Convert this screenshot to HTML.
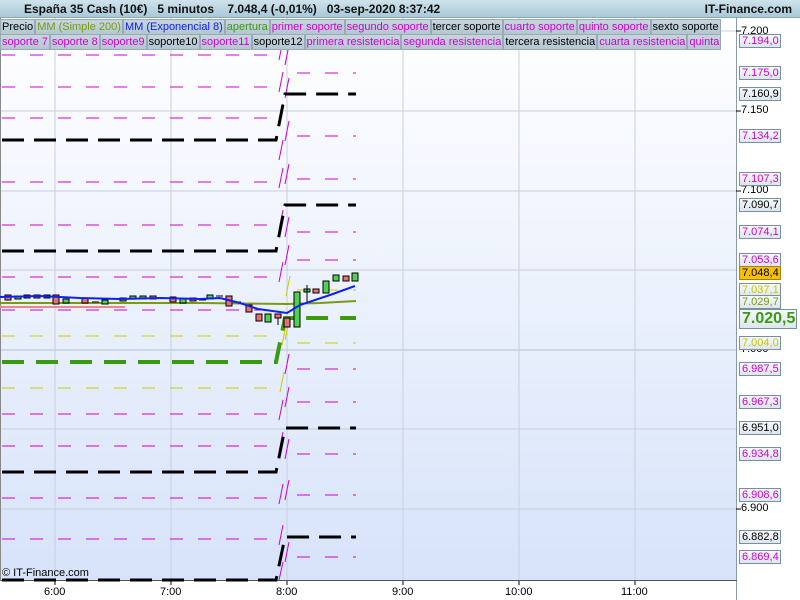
<!DOCTYPE html>
<html><head><meta charset="utf-8"><style>
*{margin:0;padding:0;box-sizing:border-box}
body{width:800px;height:600px;overflow:hidden;position:relative;background:#fff;font-family:"Liberation Sans",sans-serif}
#hdr{position:absolute;left:0;top:0;width:800px;height:18px;background:linear-gradient(#cfe3ec,#a9c9d8);border-bottom:1px solid #8aa;font-size:12px;font-weight:bold;color:#111;line-height:18px}
.row{position:absolute;left:0;height:16px;display:flex;font-size:11px;line-height:14px}
.row span{background:linear-gradient(#c7d6de,#b4c7d1);border:1px solid #9aaab4;padding:0 1px;height:16px;white-space:nowrap}
.m{color:#d000d0}.k{color:#000}
.lab{position:absolute;left:739px;width:42px;height:14px;border:1px solid #7a8f9c;background:linear-gradient(#f6f8fb,#dde6ef);font-size:11px;line-height:12px;padding-left:2px}
.tk{position:absolute;left:741px;font-size:11px;color:#000}
.xl{position:absolute;top:586px;font-size:11px;color:#000}
</style></head><body>
<svg width="800" height="600" style="position:absolute;left:0;top:0">
<defs><linearGradient id="bg" x1="0" y1="0" x2="0" y2="1"><stop offset="0" stop-color="#ffffff"/><stop offset="1" stop-color="#d7e3fa"/></linearGradient></defs>
<rect x="0" y="18" width="737" height="563" fill="url(#bg)"/>
<g stroke="#c8cfdc" stroke-width="1">
<line x1="0" y1="31" x2="737" y2="31"/><line x1="0" y1="111" x2="737" y2="111"/><line x1="0" y1="191" x2="737" y2="191"/><line x1="0" y1="270" x2="737" y2="270"/><line x1="0" y1="350" x2="737" y2="350" stroke="#b8bfcc"/><line x1="0" y1="429" x2="737" y2="429"/><line x1="0" y1="509" x2="737" y2="509"/>
<line x1="55" y1="18" x2="55" y2="585"/><line x1="171" y1="18" x2="171" y2="585"/><line x1="287" y1="18" x2="287" y2="585"/><line x1="403" y1="18" x2="403" y2="585"/><line x1="519" y1="18" x2="519" y2="585"/><line x1="635" y1="18" x2="635" y2="585"/>
</g>
<line x1="736.5" y1="18" x2="736.5" y2="600" stroke="#8a9aa6"/>
<line x1="0" y1="580.5" x2="737" y2="580.5" stroke="#555"/>
<line x1="0.5" y1="18" x2="0.5" y2="581" stroke="#888"/>
<g stroke="#d000d0" stroke-width="1" stroke-dasharray="13,15">
<line x1="2" y1="55" x2="272" y2="55"/><line x1="2" y1="87" x2="272" y2="87"/><line x1="2" y1="118" x2="272" y2="118"/><line x1="2" y1="182" x2="272" y2="182"/><line x1="2" y1="225" x2="272" y2="225"/><line x1="2" y1="277" x2="272" y2="277"/><line x1="2" y1="310" x2="272" y2="310"/><line x1="2" y1="414" x2="272" y2="414"/><line x1="2" y1="446" x2="272" y2="446"/><line x1="2" y1="498" x2="272" y2="498"/><line x1="2" y1="539" x2="272" y2="539"/>
</g>
<line x1="0" y1="307" x2="125" y2="307" stroke="#e88a8a" stroke-width="2"/>
<g stroke="#cccc00" stroke-width="1" stroke-dasharray="13,15">
<line x1="2" y1="336" x2="272" y2="336"/><line x1="2" y1="388" x2="272" y2="388"/>
</g>
<g stroke="#d000d0" stroke-width="1" stroke-dasharray="13,15">
<line x1="297" y1="73" x2="356" y2="73"/><line x1="297" y1="136" x2="356" y2="136"/><line x1="297" y1="179" x2="356" y2="179"/><line x1="297" y1="232" x2="356" y2="232"/><line x1="297" y1="260" x2="356" y2="260"/><line x1="297" y1="369" x2="356" y2="369"/><line x1="297" y1="402" x2="356" y2="402"/><line x1="297" y1="454" x2="356" y2="454"/><line x1="297" y1="495" x2="356" y2="495"/><line x1="297" y1="557" x2="356" y2="557"/>
</g>
<g stroke="#cccc00" stroke-width="1" stroke-dasharray="13,15"><line x1="297" y1="343" x2="356" y2="343"/><line x1="297" y1="290" x2="356" y2="290"/></g>
<!-- slanted magenta connectors -->
<g stroke="#d000d0" stroke-width="1">
<path d="M279 60L283 40M279 92L283 72M279 124L283 104M279 160L283 140M279 188L283 168M279 230L283 210M279 282L283 262M279 420L283 400M279 452L283 432M279 504L283 484M279 545L283 525M279 580L283 562"/>
<path d="M285 65L289 45M285 98L289 78M285 141L289 121M285 184L289 164M285 237L289 217M285 265L289 245M285 374L289 354M285 407L289 387M285 459L289 439M285 500L289 480M285 562L289 542"/>
</g>
<path d="M280 392L284 372M282 345L286 325M285 340L289 320M286 296L290 276" stroke="#cccc00"/>
<g stroke="#000" stroke-width="3" fill="none" stroke-dasharray="22,10">
<path d="M2 140H276L285 94H356"/><path d="M2 251H276L285 205H356"/><path d="M2 472H276L285 428H356"/><path d="M2 580H276L285 537H356"/>
</g>
<path d="M2 362H276L285 318H356" stroke="#3a9a10" stroke-width="4" fill="none" stroke-dasharray="22,12"/>
<polyline points="0,303 120,303 200,303 287,304 320,303 356,301" stroke="#7a9a10" stroke-width="2" fill="none"/>
<g stroke="#000" stroke-width="1">
<rect x="5" y="295" width="6" height="5" fill="#e87070"/><rect x="15" y="296" width="6" height="3" fill="#50d050"/><rect x="24" y="295" width="6" height="3" fill="#50d050"/><rect x="34" y="295" width="6" height="3" fill="#e87070"/><rect x="44" y="295" width="6" height="3" fill="#50d050"/><rect x="53" y="295" width="6" height="9" fill="#e87070"/><rect x="63" y="299" width="6" height="4" fill="#50d050"/><line x1="72" y1="298" x2="80" y2="298"/><rect x="82" y="298" width="6" height="5" fill="#e87070"/><line x1="92" y1="302" x2="99" y2="302"/><rect x="102" y="300" width="6" height="4" fill="#50d050"/><rect x="120" y="298" width="6" height="3" fill="#50d050"/><rect x="130" y="296" width="6" height="3" fill="#50d050"/><rect x="140" y="296" width="6" height="3" fill="#50d050"/><rect x="150" y="296" width="6" height="3" fill="#e87070"/><line x1="160" y1="298" x2="167" y2="298"/><rect x="170" y="297" width="6" height="5" fill="#e87070"/><rect x="180" y="299" width="6" height="4" fill="#50d050"/><rect x="190" y="298" width="6" height="3" fill="#e87070"/><line x1="199" y1="300" x2="206" y2="300"/><rect x="207" y="295" width="6" height="4" fill="#50d050"/><line x1="216" y1="296" x2="223" y2="296"/><rect x="226" y="296" width="6" height="10" fill="#e87070"/><line x1="233" y1="302" x2="241" y2="302"/><rect x="246" y="305" width="6" height="7" fill="#e87070"/><rect x="256" y="314" width="6" height="7" fill="#e87070"/><rect x="265" y="314" width="6" height="8" fill="#50d050"/><rect x="275" y="314" width="6" height="4" fill="#e87070"/><line x1="278" y1="318" x2="278" y2="325"/><rect x="284" y="318" width="6" height="9" fill="#e87070"/><rect x="294" y="292" width="6" height="35" fill="#50d050"/><rect x="304" y="289" width="6" height="3" fill="#50d050"/><line x1="307" y1="285" x2="307" y2="302"/><rect x="313" y="289" width="6" height="4" fill="#e87070"/><rect x="323" y="281" width="6" height="12" fill="#50d050"/><rect x="333" y="275" width="6" height="6" fill="#50d050"/><rect x="343" y="276" width="6" height="5" fill="#e87070"/><rect x="352" y="273" width="6" height="8" fill="#50d050"/>
</g>
<polyline points="0,297 40,296 80,298 120,299 160,298 200,299 220,298 240,303 258,309 287,313 300,305 330,295 355,286" stroke="#1020f0" stroke-width="2" fill="none"/>
<g stroke="#000"><line x1="736" y1="31" x2="741" y2="31"/><line x1="736" y1="111" x2="741" y2="111"/><line x1="736" y1="191" x2="741" y2="191"/><line x1="736" y1="509" x2="741" y2="509"/>
<line x1="55" y1="581" x2="55" y2="585"/><line x1="171" y1="581" x2="171" y2="585"/><line x1="287" y1="581" x2="287" y2="585"/><line x1="403" y1="581" x2="403" y2="585"/><line x1="519" y1="581" x2="519" y2="585"/><line x1="635" y1="581" x2="635" y2="585"/></g>
<g><rect x="9" y="9" width="5" height="8" fill="#e87070" stroke="#000" stroke-width=".7"/><rect x="14" y="3" width="5" height="10" fill="#50d050" stroke="#000" stroke-width=".7"/></g>
</svg>
<div id="hdr"><span style="position:absolute;left:24px">España 35 Cash (10€)&nbsp;&nbsp;&nbsp;5 minutos&nbsp;&nbsp;&nbsp;&nbsp;7.048,4 (-0,01%)&nbsp;&nbsp;&nbsp;03-sep-2020 8:37:42</span><span style="position:absolute;right:8px">IT-Finance.com</span></div>
<div class="row" style="top:19px"><span class="k">Precio</span><span style="color:#7a9a10">MM (Simple 200)</span><span style="color:#1020f0">MM (Exponencial 8)</span><span style="color:#3a9a10">apertura</span><span class="m">primer soporte</span><span class="m">segundo soporte</span><span class="k">tercer soporte</span><span class="m">cuarto soporte</span><span class="m">quinto soporte</span><span class="k">sexto soporte</span></div>
<div class="row" style="top:34px"><span class="m">soporte 7</span><span class="m">soporte 8</span><span class="m">soporte9</span><span class="k">soporte10</span><span class="m">soporte11</span><span class="k">soporte12</span><span class="m">primera resistencia</span><span class="m">segunda resistencia</span><span class="k">tercera resistencia</span><span class="m">cuarta resistencia</span><span class="m" style="width:34px;overflow:hidden">quinta resistencia</span></div>
<div class="tk" style="top:25px">7.200</div><div class="tk" style="top:104px">7.150</div><div class="tk" style="top:184px">7.100</div><div class="tk" style="top:343px">7.000</div><div class="tk" style="top:502px">6.900</div>
<div class="lab m" style="top:34px">7.194,0</div>
<div class="lab m" style="top:66px">7.175,0</div>
<div class="lab k" style="top:87px">7.160,9</div>
<div class="lab m" style="top:129px">7.134,2</div>
<div class="lab m" style="top:172px">7.107,3</div>
<div class="lab k" style="top:198px">7.090,7</div>
<div class="lab m" style="top:225px">7.074,1</div>
<div class="lab m" style="top:253px">7.053,6</div>
<div class="lab" style="top:283px;color:#c8c800">7.037,1</div>
<div class="lab k" style="top:266px;background:#f8c000;border-color:#a08020">7.048,4</div>
<div class="lab" style="top:295px;color:#7a9a10">7.029,7</div>
<div class="lab" style="top:309px;height:20px;width:58px;font-size:16px;line-height:18px;font-weight:bold;color:#3a9a10">7.020,5</div>
<div class="lab" style="top:336px;color:#c8c800">7.004,0</div>
<div class="lab m" style="top:362px">6.987,5</div>
<div class="lab m" style="top:395px">6.967,3</div>
<div class="lab k" style="top:421px">6.951,0</div>
<div class="lab m" style="top:447px">6.934,8</div>
<div class="lab m" style="top:488px">6.908,6</div>
<div class="lab k" style="top:530px">6.882,8</div>
<div class="lab m" style="top:550px">6.869,4</div>
<div style="position:absolute;left:2px;top:567px;font-size:11px;color:#000">© IT-Finance.com</div>
<div class="xl" style="left:44px">6:00</div><div class="xl" style="left:160px">7:00</div><div class="xl" style="left:276px">8:00</div><div class="xl" style="left:392px">9:00</div><div class="xl" style="left:505px">10:00</div><div class="xl" style="left:621px">11:00</div>
</body></html>
